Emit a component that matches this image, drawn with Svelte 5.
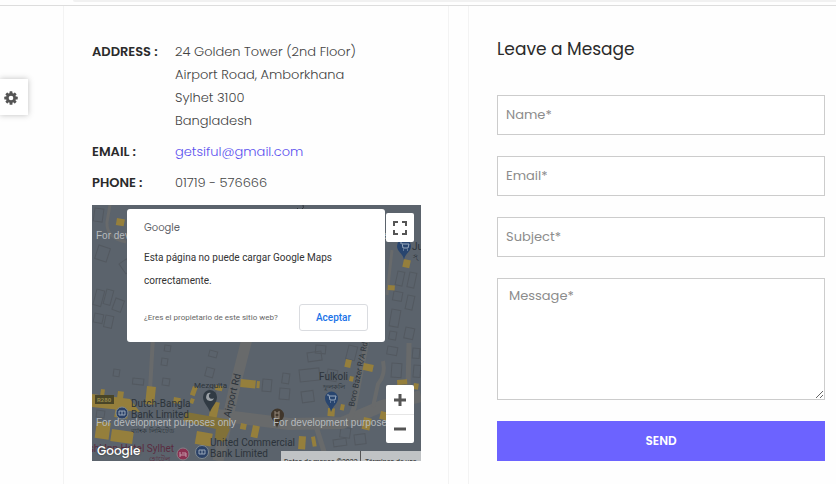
<script lang="ts">
  const contacts = [
    {
      label: 'ADDRESS :',
      lines: ['24 Golden Tower (2nd Floor)', 'Airport Road, Amborkhana', 'Sylhet 3100', 'Bangladesh'],
    },
    { label: 'EMAIL :', email: 'getsiful@gmail.com' },
    { label: 'PHONE :', lines: ['01719 - 576666'] },
  ];

  const fields = [
    { id: 'name', type: 'text', label: 'Name*' },
    { id: 'email', type: 'email', label: 'Email*' },
    { id: 'subject', type: 'text', label: 'Subject*' },
  ];

  // building outlines and commercial plots: x, y, width, height, rotation
  const buildings = [
    [3, 3, 9, 13, 8], [7, 40, 12, 14, 18], [27, 59, 9, 12, -35], [5, 84, 8, 16, 15],
    [15, 84, 7, 15, 15], [24, 93, 9, 12, 20], [3, 108, 9, 9, 12], [14, 110, 8, 12, 12],
    [22, 164, 6, 7, 8], [41, 173, 11, 6, 6], [70, 153, 6, 7, 8], [73, 140, 6, 6, 8],
    [71, 173, 7, 7, 8], [115, 162, 8, 9, 15], [118, 145, 8, 6, 15], [118, 180, 7, 7, 12],
    [191, 168, 7, 10, 8], [207, 165, 20, 12, -6], [215, 148, 14, 9, -8], [188, 183, 10, 11, 5],
    [209, 187, 12, 11, -8], [224, 140, 10, 8, 5], [236, 164, 10, 11, 10], [257, 140, 9, 14, 14],
    [296, 141, 10, 8, 10], [300, 158, 10, 14, 4], [321, 143, 7, 10, 5], [322, 160, 7, 12, 5],
    [306, 66, 7, 14, 12], [318, 67, 7, 15, 12], [302, 86, 9, 9, 10], [316, 90, 7, 14, 12],
    [300, 104, 9, 17, 10], [314, 122, 9, 11, 12], [298, 126, 7, 8, 10], [249, 222, 10, 10, 8],
    [262, 230, 11, 10, -7], [241, 235, 13, 7, -8], [5, 205, 8, 7, 8], [171, 174, 9, 12, 5],
  ];

  const plots = [
    [25, 13, 8, 7, 10], [312, 54, 7, 8, 12], [296, 80, 7, 5, 5], [55, 181, 9, 18, 6],
    [26, 186, 6, 10, 8], [9, 184, 4, 6, 8], [5, 216, 14, 17, 8], [24, 200, 13, 12, 8],
    [20, 224, 22, 12, 8], [82, 192, 7, 6, 10], [101, 181, 5, 9, 20], [99, 193, 4, 5, 20],
    [149, 174, 15, 8, 6], [124, 180, 7, 5, 12], [120, 196, 8, 18, 12], [105, 226, 16, 13, 10],
    [149, 218, 6, 6, 12], [161, 220, 7, 12, 12], [254, 154, 6, 8, 12], [272, 158, 10, 7, 12],
    [258, 171, 4, 5, 12], [236, 203, 7, 8, 4], [249, 199, 4, 6, 12], [207, 231, 7, 13, 4],
    [219, 232, 4, 10, -10], [272, 212, 8, 12, 12], [289, 206, 7, 8, 12], [305, 175, 10, 5, -4],
    [322, 178, 5, 6, 10], [165, 176, 3, 7, 5],
  ];
</script>

<div class="topbar"><span></span></div>

<main>
  <button class="settings" aria-label="Settings">
    <svg viewBox="0 0 24 24" width="14" height="14">
      <g fill="#555">
        {#each [0, 45, 90, 135] as angle}
          <rect x="9.5" y="0.5" width="5" height="23" rx="1" transform="rotate({angle} 12 12)" />
        {/each}
        <circle cx="12" cy="12" r="8.5" />
      </g>
      <circle cx="12" cy="12" r="4" fill="#fff" />
    </svg>
  </button>

  <section class="panel info">
    <dl>
      {#each contacts as contact}
        <dt>{contact.label}</dt>
        <dd>
          {#if contact.email}
            <a href="mailto:{contact.email}">{contact.email}</a>
          {:else}
            {#each contact.lines ?? [] as line}
              <div>{line}</div>
            {/each}
          {/if}
        </dd>
      {/each}
    </dl>

    <div class="map">
      <svg class="tiles" viewBox="0 0 329 256" preserveAspectRatio="xMidYMid slice">
        <rect width="329" height="256" fill="#5b636c" />
        <g fill="none" stroke="#535960" stroke-width="1">
          {#each buildings as [x, y, w, h, r]}
            <rect {x} {y} width={w} height={h} transform="rotate({r} {x} {y})" />
          {/each}
        </g>
        <g fill="none" stroke="#686a6b" stroke-linejoin="round">
          <path d="M18 0 L15 17 Q14 33 34 37" stroke-width="3" />
          <path d="M61 132 L58 185" stroke-width="4" />
          <path d="M156 130 L142 185 L130 238 L126 256" stroke-width="11" />
          <path d="M125 210 L197 219 L250 218 L290 201 L329 191" stroke-width="12" />
          <path d="M276 130 L262 203 L257 216" stroke-width="5" />
          <path d="M291 156 Q294 170 286 179 L281 202" stroke-width="4" />
          <path d="M317 138 L316 185" stroke-width="5" />
          <path d="M224 221 L229 237 L235 256" stroke-width="5" />
          <path d="M300 45 L295 90" stroke-width="3" />
        </g>
        <g fill="#957f3c">
          {#each plots as [x, y, w, h, r]}
            <rect {x} {y} width={w} height={h} transform="rotate({r} {x} {y})" />
          {/each}
          <path d="M0 189 L38 194 L48 207 L0 202z" />
          <path d="M94 207 L139 215 L136 227 L91 216z M124 222 L138 224 L132 237 L123 234z" fill="#817138" />
        </g>
        <rect x="3" y="190" width="19" height="9" fill="#494528" />
        <text x="5" y="197" font-size="6" font-weight="700" fill="#968a4c">R280</text>

        <!-- bank markers -->
        <g fill="#2b4167" stroke="#7f8990">
          <circle cx="30" cy="208" r="6" />
          <circle cx="110" cy="247" r="6.5" />
        </g>
        <g fill="none" stroke="#98a6b8">
          <path d="M27 206h6v4h-6zM30 206v4" />
          <path d="M107 245h6v4h-6zM110 245v4" />
        </g>
        <circle cx="91" cy="249" r="6" fill="#8b3151" stroke="#878087" />
        <path d="M88 247v5M88 250h6v2M90 248h4v2" fill="none" stroke="#c29aaa" />

        <!-- mosque -->
        <path d="M118 207 C116 201 111 198 111 192 a7 7 0 0 1 14 0 C125 198 120 201 118 207z" fill="#303a43" />
        <path d="M119 188 a4 4 0 1 0 3 5 a3 3 0 1 1 -3 -5z" fill="#9ba1a6" />

        <!-- shops -->
        <path d="M239 207 C238 200 233 199 233 193 a6.500 6.500 0 0 1 13 0 C246 199 241 200 239 207z" fill="#28456f" />
        <path d="M235 190h2l1 5h5l1-4h-6M238 197h1M242 197h1" fill="none" stroke="#9aabbf" />
        <path d="M312 55 C311 48 305 47 305 41 a7 7 0 0 1 14 0 C319 47 313 48 312 55z" fill="#28456f" />
        <path d="M308 38h2l1 5h5l1-4h-6M311 45h1M315 45h1" fill="none" stroke="#9aabbf" />
        <path d="M185 223 C184 217 179 215 179 210 a6.500 6.500 0 0 1 13 0 C192 215 186 217 185 223z" fill="#40362b" />
        <path d="M183 206v8M187 206v8M183 208h4M183 212h4" stroke="#95877a" />

        <g class="place">
          <text x="102" y="183" font-size="8">Mezquita</text>
          <text x="39" y="202">Dutch-Bangla</text>
          <text x="39" y="213">Bank Limited</text>
          <text x="118" y="241">United Commercial</text>
          <text x="118" y="252">Bank Limited</text>
          <text x="227" y="175">Fulkoli</text>
          <text x="320" y="45">Ju</text>
          <text x="321" y="54" font-size="7">স্</text>
          <text class="hotel" x="82" y="247" text-anchor="end">Panshi Inn Hotel Sylhet</text>
          <text x="231" y="184" font-size="7">ফুলকলি</text>
          <text x="39" y="228" font-size="7">ব্যাংক লিমিটেড</text>
          <text class="hotel" x="57" y="256" font-size="7">হোটেল</text>
          <text transform="translate(138 213) rotate(-76)" font-size="10">Airport Rd</text>
          <text transform="translate(262 202) rotate(-78)" font-size="8">Boro Bazer R/A Rd</text>
        </g>
        <path d="M205 3 a3 3 0 1 0 6-3" fill="none" stroke="#30363b" />
        <g class="watermark">
          <text x="4" y="34">For development purposes only</text>
          <text x="181" y="34">For development purposes only</text>
          <text x="4" y="221">For development purposes only</text>
          <text x="181" y="221">For development purposes only</text>
        </g>
      </svg>

      <div class="dialog" role="dialog" aria-label="Google Maps">
        <div class="brand">Google</div>
        <p>Esta página no puede cargar Google Maps correctamente.</p>
        <div class="actions">
          <a href="#owner">¿Eres el propietario de este sitio web?</a>
          <button>Aceptar</button>
        </div>
      </div>

      <button class="fullscreen" aria-label="Fullscreen">
        <svg viewBox="0 0 14 14" width="14" height="14">
          <path d="M1 5V1h4M9 1h4v4M13 9v4H9M5 13H1V9" fill="none" stroke="#555" stroke-width="2" />
        </svg>
      </button>

      <div class="zoom">
        <button aria-label="Zoom in">
          <svg viewBox="0 0 14 14" width="14" height="14"><path d="M7 1v12M1 7h12" /></svg>
        </button>
        <button aria-label="Zoom out">
          <svg viewBox="0 0 14 14" width="14" height="14"><path d="M1 7h12" /></svg>
        </button>
      </div>

      <div class="logo">Google</div>
      <div class="legal">
        <span>Datos de mapas ©2022</span>
        <a href="#terms">Términos de uso</a>
      </div>
    </div>
  </section>

  <section class="panel message">
    <h2>Leave a Mesage</h2>
    <form onsubmit={(event) => event.preventDefault()}>
      {#each fields as field}
        <input id={field.id} type={field.type} placeholder={field.label} aria-label={field.label} />
      {/each}
      <textarea id="message" placeholder="Message*" aria-label="Message*"></textarea>
      <button type="submit">SEND</button>
    </form>
  </section>
</main>

<style>
  :global(body) {
    margin: 0;
    overflow: hidden;
    background: #fefefe;
    color: #444;
    font-family: Poppins, Inter, sans-serif;
    font-size: 13px;
  }

  .topbar {
    box-sizing: border-box;
    height: 6px;
    padding-left: 73px;
    border-bottom: 1px solid #ddd;

    & span {
      display: block;
      height: 2px;
      background: #f1f1f1;
      border-radius: 0 0 0 4px;
    }
  }

  main {
    position: relative;
    display: grid;
    grid-template-columns: 386fr 368fr;
    gap: 19px;
    box-sizing: border-box;
    min-height: calc(100vh - 6px);
    padding-left: 63px;
  }

  button {
    padding: 0;
    border: 0;
    cursor: pointer;
    font-family: inherit;
  }

  .settings {
    position: absolute;
    left: 0;
    top: 73px;
    width: 28px;
    height: 36px;
    padding: 2px 7px 0 0;
    display: flex;
    align-items: center;
    justify-content: center;
    background: #fff;
    box-shadow: 0 0 6px rgba(0, 0, 0, 0.25);
  }

  .panel {
    box-sizing: border-box;
    min-width: 0;
    border-left: 1px solid #f3f3f3;
  }

  .info {
    padding: 34px 27px 23px 28px;
    border-right: 1px solid #f3f3f3;
  }

  dl {
    display: grid;
    grid-template-columns: 83px 1fr;
    row-gap: 8px;
    margin: 0 0 11px;
    line-height: 23px;
  }

  dt {
    color: #2b2b2b;
    font-size: 13px;
    font-weight: 600;
  }

  dd {
    margin: 0;
    font-weight: 300;

    & a {
      color: #5a50ee;
      text-decoration: none;
    }
  }

  .map {
    position: relative;
    height: 256px;
    overflow: hidden;
    font-family: Roboto, sans-serif;
  }

  .tiles {
    display: block;
    width: 100%;
    height: 100%;
  }

  .place {
    fill: #2c333a;
    font-size: 10px;
  }

  .hotel {
    fill: #5a2c40;
  }

  .watermark {
    fill: #b6babd;
    font-family: 'Liberation Sans', sans-serif;
    font-size: 10px;
  }

  .dialog {
    position: absolute;
    left: 35px;
    right: 36px;
    top: 4px;
    box-sizing: border-box;
    height: 133px;
    padding: 10px 17px;
    background: #fff;
    border-radius: 3px;
    color: #333;

    & p {
      width: 200px;
      margin: 9px 0 12px;
      font-size: 10px;
      line-height: 23px;
    }
  }

  .brand {
    color: #5f6368;
    font-family: Poppins, Inter, sans-serif;
    font-size: 10px;
    line-height: 18px;
  }

  .actions {
    display: flex;
    align-items: center;
    justify-content: space-between;

    & a {
      color: #666;
      font-size: 8px;
      text-decoration: none;
      white-space: nowrap;
    }

    & button {
      width: 69px;
      height: 27px;
      background: #fff;
      border: 1px solid #dadce0;
      border-radius: 3px;
      color: #1a73e8;
      font-size: 10px;
      font-weight: 500;
    }
  }

  .fullscreen {
    position: absolute;
    top: 8px;
    right: 7px;
    width: 28px;
    height: 29px;
    display: grid;
    place-items: center;
    background: #fff;
    border-radius: 2px;
  }

  .zoom {
    position: absolute;
    right: 7px;
    bottom: 18px;
    width: 28px;
    background: #fff;
    border-radius: 2px;

    & button {
      width: 100%;
      height: 29px;
      display: grid;
      place-items: center;
      background: none;
    }

    & button + button {
      border-top: 1px solid #e6e6e6;
    }

    & path {
      fill: none;
      stroke: #555;
      stroke-width: 3px;
    }
  }

  .logo {
    position: absolute;
    left: 5px;
    bottom: 1px;
    color: #fff;
    font-family: Poppins, Inter, sans-serif;
    font-size: 12px;
    font-weight: 500;
    line-height: 18px;
    text-shadow: 0 0 2px #333;
  }

  /* the attribution strip runs past the bottom edge of the map */
  .legal {
    position: absolute;
    right: 0;
    bottom: 0;
    display: flex;
    width: 140px;
    height: 10px;
    overflow: hidden;
    background: #c0c3c5;
    color: #222;
    font-size: 7px;
    line-height: 22px;
    white-space: nowrap;

    & span {
      box-sizing: border-box;
      width: 80px;
      padding-left: 3px;
      border-right: 1px solid #555;
    }

    & a {
      padding-left: 4px;
      color: inherit;
      text-decoration: none;
    }
  }

  .message {
    padding: 30px 11px 23px 28px;
  }

  h2 {
    margin: 0 0 33px;
    color: #2b2b2b;
    font-size: 17px;
    font-weight: 400;
    line-height: 26px;
  }

  form {
    display: flex;
    flex-direction: column;
    gap: 21px;

    & input,
    & textarea {
      box-sizing: border-box;
      width: 100%;
      height: 40px;
      margin: 0;
      padding: 0 8px;
      background: #fff;
      border: 1px solid #ccc;
      border-radius: 0;
      color: #555;
      font-family: inherit;
      font-size: 13px;
    }

    & textarea {
      height: 122px;
      padding: 8px 11px;
      line-height: 18px;
      resize: vertical;
    }

    & ::placeholder {
      color: #8c8c8c;
      opacity: 1;
    }

    & button {
      height: 40px;
      background: #6c63ff;
      color: #fff;
      font-size: 12px;
      font-weight: 600;
    }
  }
</style>
